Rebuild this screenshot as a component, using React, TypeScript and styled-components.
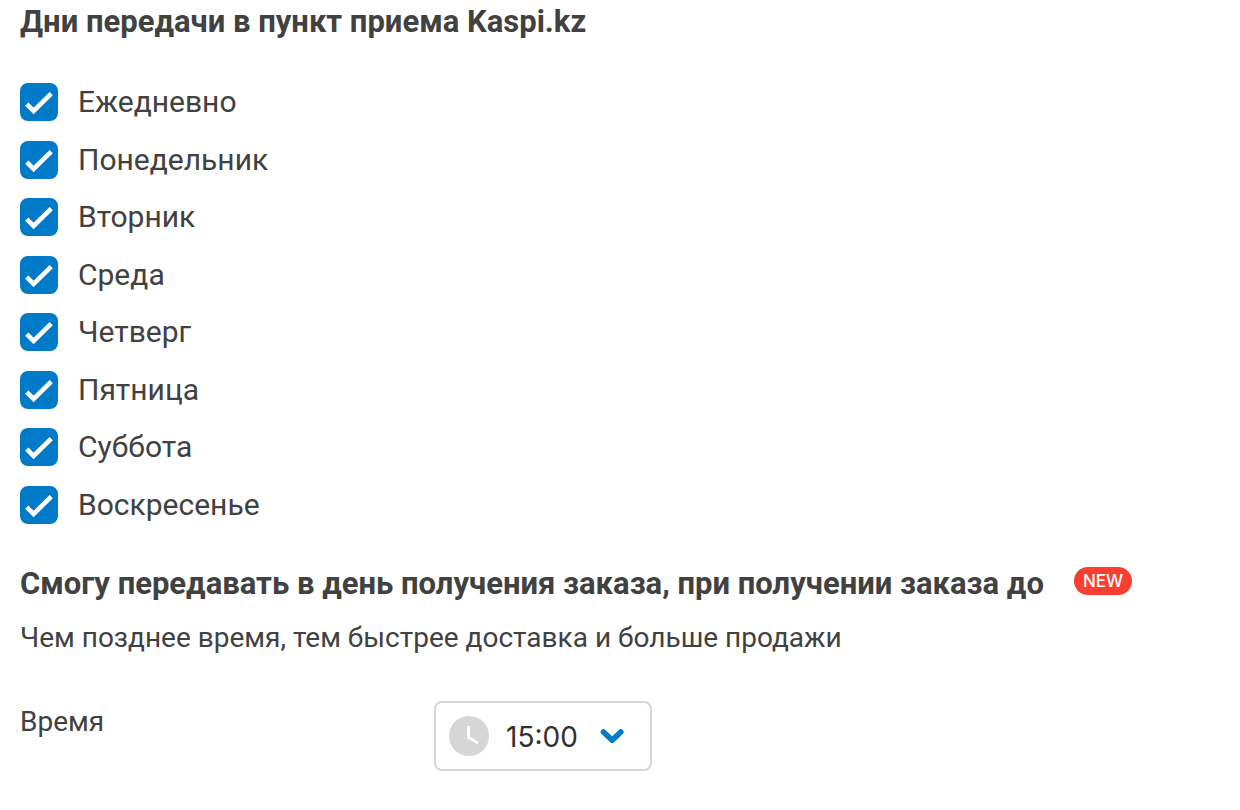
import React, { useState } from "react";
import styled, { createGlobalStyle } from "styled-components";

const GlobalStyle = createGlobalStyle`
  *, *::before, *::after { box-sizing: border-box; }
  body {
    margin: 0;
    background: #fff;
    color: #414141;
    font-family: Roboto, "Liberation Sans", sans-serif;
  }
`;

const Page = styled.main`
  padding: 3px 20px 39px;
`;

const Heading = styled.h2`
  margin: 0;
  font-size: 31px;
  line-height: 38px;
  font-weight: 700;
`;

const DayList = styled.div`
  display: flex;
  flex-direction: column;
  justify-content: space-between;
  align-items: flex-start;
  min-height: 441px;
  margin-top: 42px;
`;

const DayRow = styled.label`
  display: flex;
  align-items: center;
  gap: 20px;
  font-size: 30px;
  line-height: 38px;
  cursor: pointer;
`;

const CheckControl = styled.span`
  display: grid;
  width: 38px;
  height: 38px;
  > * { grid-area: 1 / 1; }
`;

const CheckInput = styled.input`
  appearance: none;
  width: 38px;
  height: 38px;
  margin: 0;
  border: 2px solid #c8c8c8;
  border-radius: 8px;
  cursor: pointer;
  &:checked { background: #007ac9; border-color: #007ac9; }
  &:not(:checked) + svg { visibility: hidden; }
`;

const CheckMark = styled.svg`
  width: 38px;
  height: 38px;
  pointer-events: none;
`;

const HeadingRow = styled.div`
  display: flex;
  align-items: flex-start;
  gap: 30px;
  margin-top: 41px;
`;

const NewBadge = styled.span`
  margin-top: 2px;
  padding: 0 9px;
  border-radius: 14px;
  background: #f93f32;
  color: #fff;
  font-family: Inter, sans-serif;
  font-size: 17px;
  font-weight: 500;
  line-height: 28px;
`;

const Hint = styled.p`
  margin: 18px 0 0;
  font-size: 28px;
  line-height: 34px;
`;

const TimeRow = styled.div`
  display: grid;
  grid-template-columns: 394px auto;
  align-items: start;
  justify-content: start;
  gap: 20px;
  margin-top: 46px;
`;

const TimeLabel = styled.label`
  padding-top: 4px;
  font-size: 28px;
  line-height: 34px;
`;

const SelectBox = styled.div`
  display: grid;
  align-items: center;
  width: 218px;
  > * { grid-area: 1 / 1; }
`;

const TimeSelect = styled.select`
  appearance: none;
  width: 100%;
  height: 70px;
  padding: 2px 66px 0 70px;
  border: 2px solid #d6d6d6;
  border-radius: 8px;
  background: #fff;
  color: #303030;
  font-family: Inter, sans-serif;
  font-size: 28px;
`;

const ClockIcon = styled.svg`
  width: 40px;
  height: 40px;
  margin-left: 15px;
  pointer-events: none;
`;

const ChevronIcon = styled.svg`
  justify-self: end;
  width: 24px;
  height: 16px;
  margin-right: 28px;
  pointer-events: none;
`;

const DAYS = ["Понедельник", "Вторник", "Среда", "Четверг", "Пятница", "Суббота", "Воскресенье"];
const TIMES = ["12:00", "13:00", "14:00", "15:00", "16:00", "17:00"];

interface DayProps {
  label: string;
  checked: boolean;
  onToggle: () => void;
}

function Day({ label, checked, onToggle }: DayProps) {
  return (
    <DayRow>
      <CheckControl>
        <CheckInput type="checkbox" checked={checked} onChange={onToggle} />
        <CheckMark viewBox="0 0 38 38" fill="none" aria-hidden="true">
          <path d="M6.8 21.2 13.6 28 31.2 10.6" stroke="#fff" strokeWidth="4.6" />
        </CheckMark>
      </CheckControl>
      {label}
    </DayRow>
  );
}

export default function App() {
  const [selected, setSelected] = useState<string[]>(DAYS);
  const [time, setTime] = useState("15:00");
  const everyDay = selected.length === DAYS.length;
  const toggle = (day: string) =>
    setSelected(selected.includes(day) ? selected.filter((d) => d !== day) : [...selected, day]);

  return (
    <Page>
      <GlobalStyle />
      <Heading id="days-title">Дни передачи в пункт приема Kaspi.kz</Heading>
      <DayList role="group" aria-labelledby="days-title">
        <Day label="Ежедневно" checked={everyDay} onToggle={() => setSelected(everyDay ? [] : DAYS)} />
        {DAYS.map((day) => (
          <Day key={day} label={day} checked={selected.includes(day)} onToggle={() => toggle(day)} />
        ))}
      </DayList>
      <HeadingRow>
        <Heading>Смогу передавать в день получения заказа, при получении заказа до</Heading>
        <NewBadge>NEW</NewBadge>
      </HeadingRow>
      <Hint>Чем позднее время, тем быстрее доставка и больше продажи</Hint>
      <TimeRow>
        <TimeLabel htmlFor="time">Время</TimeLabel>
        <SelectBox>
          <TimeSelect id="time" value={time} onChange={(e) => setTime(e.target.value)}>
            {TIMES.map((t) => (
              <option key={t}>{t}</option>
            ))}
          </TimeSelect>
          <ClockIcon viewBox="0 0 40 40" fill="none" aria-hidden="true">
            <circle cx="20" cy="20" r="20" fill="#d6d6d6" />
            <path d="M19.5 10v11.5l9.5 5.5" stroke="#fff" strokeWidth="3" />
          </ClockIcon>
          <ChevronIcon viewBox="0 0 24 16" fill="none" aria-hidden="true">
            <path d="m3.5 4 8.7 8.3L20.8 4" stroke="#007ac9" strokeWidth="5.6" strokeLinecap="round" strokeLinejoin="round" />
          </ChevronIcon>
        </SelectBox>
      </TimeRow>
    </Page>
  );
}
